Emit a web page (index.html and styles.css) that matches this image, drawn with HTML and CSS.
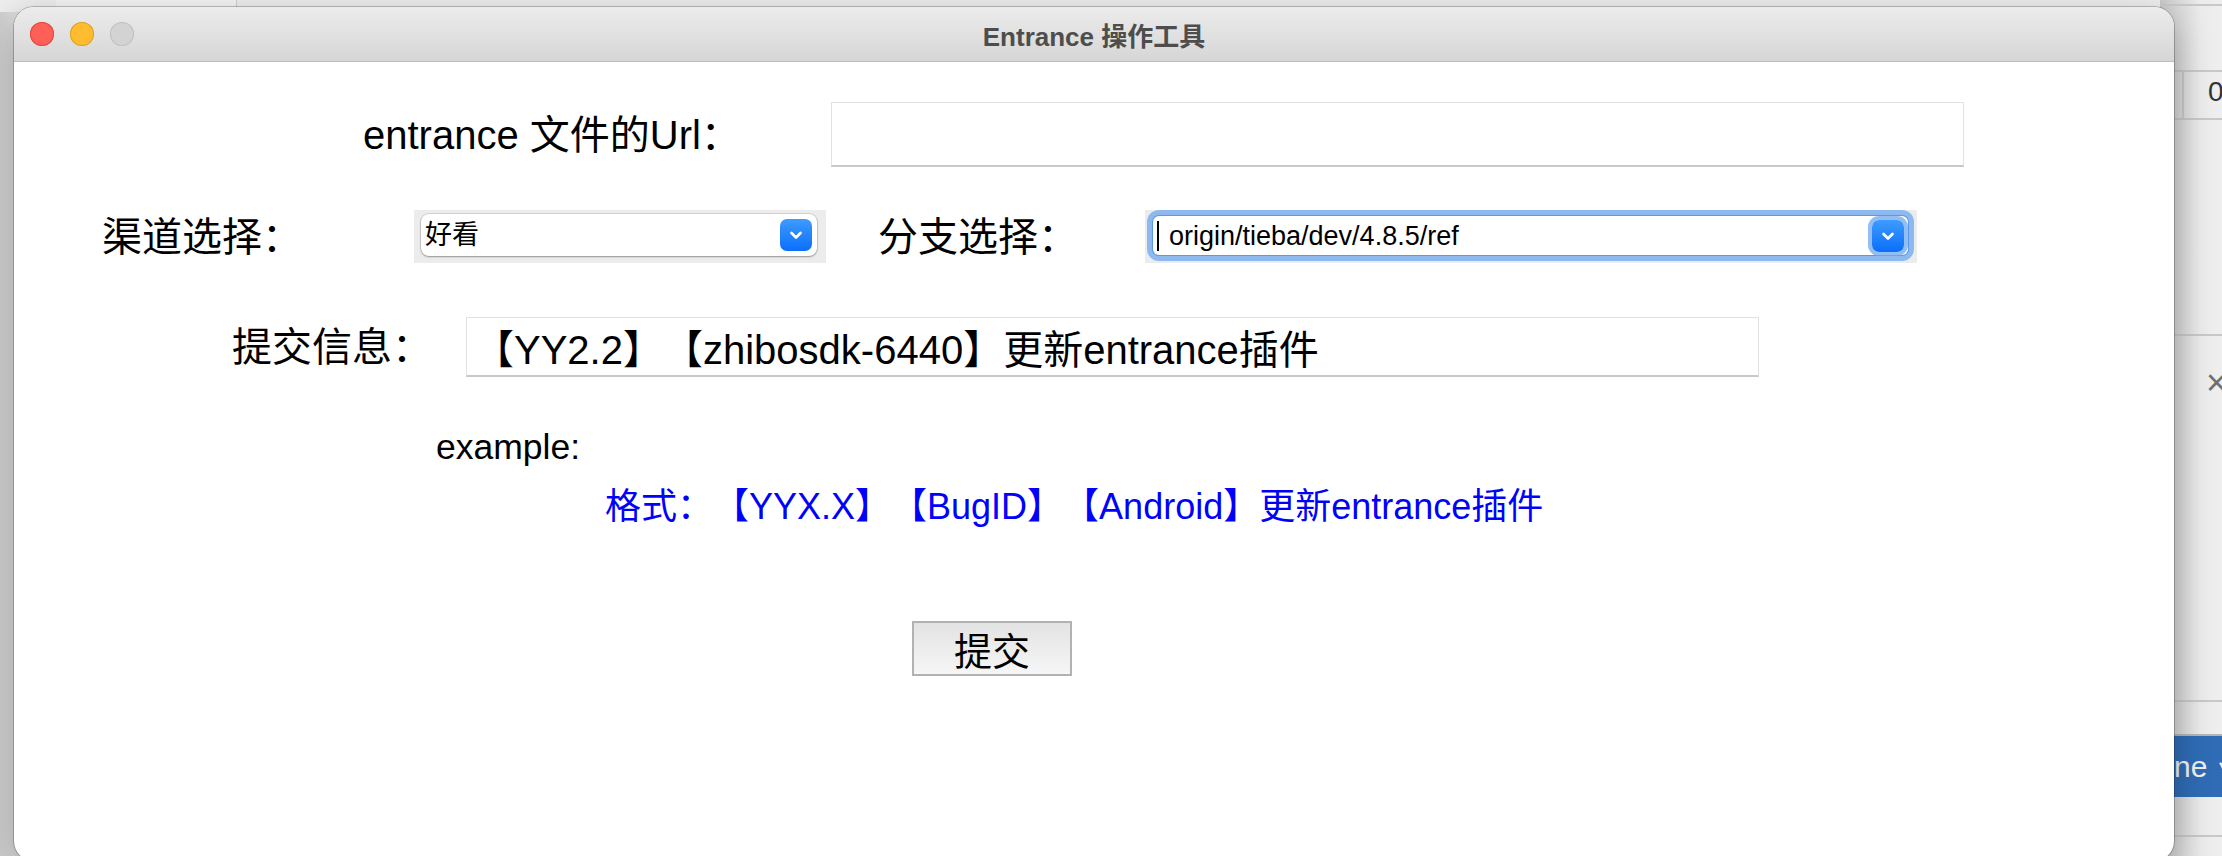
FILE: index.html
```html
<!DOCTYPE html>
<html lang="zh-CN">
<head>
<meta charset="utf-8">
<title>Entrance 操作工具</title>
<link rel="stylesheet" href="styles.css">
</head>
<body>
<div class="desktop">
  <div class="bg-top"></div>
  <div class="bg-success"><span class="bg-success-text">success</span></div>
  <div class="bg-right">
    <div class="bg-hline bg-l0"></div>
    <div class="bg-hline bg-l1"></div>
    <div class="bg-vline"></div>
    <div class="bg-hline bg-l2"></div>
    <div class="bg-zero">0</div>
    <div class="bg-hline bg-l3"></div>
    <div class="bg-close">×</div>
    <div class="bg-hline bg-l4"></div>
    <div class="bg-blue"><span class="bg-blue-text">ne</span><span class="bg-blue-caret">▾</span></div>
    <div class="bg-hline bg-l5"></div>
  </div>

  <div class="window">
    <div class="titlebar">
      <div class="lights">
        <span class="light light-red"></span>
        <span class="light light-yellow"></span>
        <span class="light light-gray"></span>
      </div>
      <div class="title">Entrance 操作工具</div>
      <div class="lights-spacer"></div>
    </div>

    <div class="content">
      <div class="row row-url">
        <div class="lbl lbl-url">entrance 文件的Url：</div>
        <div class="entry entry-url"></div>
      </div>

      <div class="row row-branch">
        <div class="lbl lbl-channel">渠道选择：</div>
        <div class="combo-wrap combo-channel">
          <div class="combo">
            <span class="combo-text">好看</span>
            <span class="combo-btn"><svg width="32" height="32" viewBox="0 0 32 32"><path d="M11.5 14 L16 18.5 L20.5 14" fill="none" stroke="#fff" stroke-width="2.6" stroke-linecap="round" stroke-linejoin="round"/></svg></span>
          </div>
        </div>
        <div class="lbl lbl-branch">分支选择：</div>
        <div class="combo-wrap combo-branch">
          <div class="combo combo-focused">
            <span class="caret"></span>
            <span class="combo-text combo-text-branch">origin/tieba/dev/4.8.5/ref</span>
            <span class="combo-btn"><svg width="32" height="32" viewBox="0 0 32 32"><path d="M11.5 14 L16 18.5 L20.5 14" fill="none" stroke="#fff" stroke-width="2.6" stroke-linecap="round" stroke-linejoin="round"/></svg></span>
          </div>
        </div>
      </div>

      <div class="row row-msg">
        <div class="lbl lbl-msg">提交信息：</div>
        <div class="entry entry-msg">【YY2.2】【zhibosdk-6440】更新entrance插件</div>
      </div>

      <div class="example">example:</div>
      <div class="format">格式：【YYX.X】【BugID】【Android】更新entrance插件</div>

      <div class="row row-submit">
        <button class="btn" type="button">提交</button>
      </div>
    </div>
  </div>
</div>
</body>
</html>
```

FILE: styles.css
```css
* { box-sizing: border-box; }

html, body {
  margin: 0;
  padding: 0;
}

body {
  width: 2222px;
  height: 856px;
  overflow: hidden;
  background: linear-gradient(90deg, #cfcfcf 0, #dcdcdc 14px, #e4e4e4 100%);
  font-family: "Liberation Sans", "Noto Sans CJK SC", sans-serif;
  color: #000;
  text-spacing-trim: space-all;
  font-feature-settings: "halt" 0, "palt" 0;
}

.desktop {
  position: relative;
  width: 2222px;
  height: 856px;
  padding: 7px 0 0 14px;
}

/* ---------- backdrop (other windows) ---------- */
.bg-top {
  position: absolute;
  left: 0;
  top: 0;
  width: 2222px;
  height: 12px;
  background: #eeeeee;
}

.bg-success {
  position: absolute;
  left: 56px;
  top: 0;
  width: 181px;
  height: 12px;
  background: #f4f4f4;
  border-right: 1px solid #d0d0d0;
  overflow: hidden;
}

.bg-success-text {
  position: absolute;
  left: 8px;
  top: -27px;
  font-size: 30px;
  color: #222;
}

.bg-right {
  position: absolute;
  left: 2160px;
  top: 0;
  width: 62px;
  height: 856px;
  background: linear-gradient(90deg, #c9c9c9 0, #d9d9d9 18px, #ebebeb 40px, #efefef 100%);
  overflow: hidden;
}

.bg-hline {
  position: absolute;
  left: 0;
  width: 62px;
  height: 2px;
  background: #c8c8c8;
}

.bg-l0 { top: 4px; }
.bg-l1 { top: 70px; }
.bg-l2 { top: 118px; }
.bg-l3 { top: 334px; }
.bg-l4 { top: 700px; }
.bg-l5 { top: 835px; }

.bg-vline {
  position: absolute;
  left: 22px;
  top: 70px;
  width: 2px;
  height: 50px;
  background: #c8c8c8;
}

.bg-zero {
  position: absolute;
  left: 48px;
  top: 76px;
  font-size: 28px;
  color: #333;
}

.bg-close {
  position: absolute;
  left: 46px;
  top: 362px;
  font-size: 36px;
  color: #707070;
}

.bg-blue {
  position: absolute;
  left: 0;
  top: 734px;
  width: 62px;
  height: 63px;
  border-top: 2px solid #b5b5b5;
  background: #2f6cb5;
  color: #f0f0f0;
  font-size: 30px;
  padding-left: 14px;
  display: flex;
  align-items: center;
  gap: 12px;
}

.bg-blue-caret { font-size: 22px; }

/* ---------- main window ---------- */
.window {
  position: relative;
  z-index: 1;
  width: 2160px;
  height: 854px;
  background: #ffffff;
  border-radius: 20px;
  overflow: hidden;
  box-shadow: 0 0 0 1px rgba(0, 0, 0, 0.22), 0 12px 36px rgba(0, 0, 0, 0.3);
}

.titlebar {
  height: 55px;
  display: flex;
  align-items: center;
  background: linear-gradient(#ececec, #d6d6d6);
  border-bottom: 1px solid #bcbcbc;
}

.lights {
  width: 120px;
  display: flex;
  gap: 16px;
  padding-left: 16px;
  padding-bottom: 1px;
}

.light {
  width: 24px;
  height: 24px;
  border-radius: 50%;
}

.light-red { background: #fe5f57; box-shadow: inset 0 0 0 1px #e2463f; }
.light-yellow { background: #febc2e; box-shadow: inset 0 0 0 1px #dea123; }
.light-gray { background: #d3d3d3; box-shadow: inset 0 0 0 1px #c0c0c0; }

.lights-spacer { width: 120px; }

.title {
  flex: 1;
  text-align: center;
  font-size: 26px;
  font-weight: bold;
  color: #4d4d4d;
}

/* ---------- form ---------- */
.row {
  display: flex;
  align-items: center;
}

.lbl {
  font-size: 40px;
  line-height: 48px;
  white-space: nowrap;
}

.entry {
  height: 100%;
  background: #ffffff;
  border: 1px solid #e2e2e2;
  border-bottom: 2px solid #c9c9c9;
}

.row-url {
  margin-top: 40px;
  height: 65px;
  padding-left: 349px;
}

.lbl-url { width: 468px; }
.entry-url { width: 1133px; }

.row-branch {
  margin-top: 43px;
  height: 53px;
  padding-left: 88px;
}

.lbl-channel { width: 312px; }
.lbl-branch { width: 267px; margin-left: 52px; }

.combo-wrap {
  height: 53px;
  background: #ececec;
}

.combo-channel {
  width: 412px;
  padding: 4px 9px 7px 7px;
}

.combo-branch {
  width: 772px;
  padding: 6px 9px 8px 8px;
}

.combo {
  height: 100%;
  display: flex;
  align-items: center;
  background: #ffffff;
  border-radius: 8px;
  padding: 0 5px 0 4px;
  box-shadow: 0 0 0 1px rgba(0, 0, 0, 0.1), 0 1px 2px rgba(0, 0, 0, 0.3);
}

.combo-focused {
  border-radius: 6px;
  box-shadow: 0 0 0 1px rgba(60, 130, 230, 0.6), 0 0 0 6px rgba(110, 168, 240, 0.75);
  padding-left: 4px;
  padding-right: 4px;
}

.caret {
  width: 2px;
  height: 30px;
  background: #000;
}

.combo-text {
  flex: 1;
  font-size: 27px;
  line-height: 32px;
  white-space: nowrap;
}

.combo-text-branch { margin-left: 10px; }

.combo-btn {
  width: 32px;
  height: 32px;
  border-radius: 7px;
  background: linear-gradient(#3e9bff, #0a6ffb);
  display: flex;
  align-items: center;
  justify-content: center;
}

.combo-focused .combo-btn {
  box-shadow: 0 0 0 4px rgba(110, 168, 240, 0.75);
}

.row-msg {
  margin-top: 54px;
  height: 60px;
  padding-left: 218px;
}

.lbl-msg { width: 234px; }

.entry-msg {
  width: 1293px;
  display: flex;
  align-items: center;
  padding-left: 7px;
  font-size: 40px;
  white-space: nowrap;
}

.example {
  margin-top: 50px;
  padding-left: 422px;
  font-size: 35.5px;
  line-height: 41px;
}

.format {
  margin-top: 18px;
  padding-left: 591px;
  font-size: 36px;
  line-height: 41px;
  color: #0000ff;
  white-space: nowrap;
}

.row-submit {
  margin-top: 94px;
  padding-left: 898px;
}

.btn {
  width: 160px;
  height: 55px;
  padding: 0;
  border: 2px solid #b2b2b2;
  background: linear-gradient(#e3e3e3, #f6f6f6);
  font-family: "Liberation Sans", "Noto Sans CJK SC", sans-serif;
  font-size: 38px;
  color: #000;
  display: flex;
  align-items: center;
  justify-content: center;
}
```
